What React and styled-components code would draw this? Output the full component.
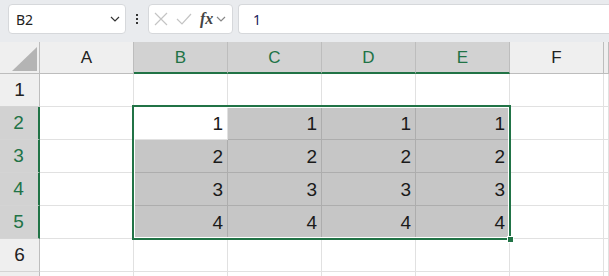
import React from 'react'
import styled, { createGlobalStyle } from 'styled-components'

const GREEN = '#217346'

const GlobalStyle = createGlobalStyle`
    html, body {
        margin: 0;
        padding: 0;
        background: #fff;
        overflow: hidden;
    }
    body {
        font-family: 'Noto Sans', 'Liberation Sans', sans-serif;
    }
    * {
        box-sizing: border-box;
    }
`

const columns = ['A', 'B', 'C', 'D', 'E', 'F', '']
const rows = [1, 2, 3, 4, 5, 6, 7]
const values = { 2: 1, 3: 2, 4: 3, 5: 4 }

const isSelCol = (c) => c >= 1 && c <= 4
const isSelRow = (r) => r >= 2 && r <= 5

function Chevron({ color = '#444' }) {
    return (
        <svg width="10" height="6" viewBox="0 0 10 6">
            <path d="M1 1 L5 5 L9 1" fill="none" stroke={color} strokeWidth="1.2" />
        </svg>
    )
}

function App() {
    return (
        <>
            <GlobalStyle />
            <Page>
                <Toolbar>
                    <NameBox>
                        <NameText>B2</NameText>
                        <Chevron color="#333" />
                    </NameBox>
                    <Dots>
                        <Dot />
                        <Dot />
                        <Dot />
                    </Dots>
                    <FxBox>
                        <svg width="14" height="14" viewBox="0 0 14 14">
                            <path d="M1 1 L13 13 M13 1 L1 13" stroke="#c4c4c4" strokeWidth="1.2" />
                        </svg>
                        <svg width="16" height="12" viewBox="0 0 16 12">
                            <path d="M1 6 L6 11 L15 1" fill="none" stroke="#c4c4c4" strokeWidth="1.2" />
                        </svg>
                        <Fx>fx</Fx>
                        <Chevron color="#888" />
                    </FxBox>
                    <FormulaBar>
                        <FormulaText>1</FormulaText>
                    </FormulaBar>
                </Toolbar>
                <Sheet>
                    <Corner>
                        <Triangle />
                    </Corner>
                    {columns.map((c, i) => (
                        <ColHead key={'h' + i} $col={i + 2} $sel={isSelCol(i)}>{c}</ColHead>
                    ))}
                    {rows.map((r) => (
                        <React.Fragment key={r}>
                            {/* row 7 only peeks in at the bottom edge, its label is out of view */}
                            <RowHead $row={r + 1} $sel={isSelRow(r)}>{r < 7 ? r : ''}</RowHead>
                            {columns.map((c, i) => {
                                const sel = isSelRow(r) && isSelCol(i)
                                const active = r === 2 && i === 1
                                return (
                                    <Cell key={'c' + i} $row={r + 1} $col={i + 2} $sel={sel && !active}>
                                        {sel ? values[r] : ''}
                                    </Cell>
                                )
                            })}
                        </React.Fragment>
                    ))}
                    <Selection>
                        <Handle />
                    </Selection>
                </Sheet>
            </Page>
        </>
    )
}

const Page = styled.div`
    width: 609px;
    height: 276px;
    overflow: hidden;
    background: #fff;
`
const Toolbar = styled.div`
    height: 42px;
    background: #e9ebee;
    display: flex;
    align-items: flex-start;
    padding: 4px 0 0 8px;
`
const NameBox = styled.div`
    width: 118px;
    height: 30px;
    background: #fff;
    border: 1px solid #d6d8db;
    border-radius: 4px;
    display: flex;
    align-items: center;
    justify-content: space-between;
    padding: 0 5px 0 7px;
`
const NameText = styled.span`
    font-size: 14px;
    color: #222;
    padding-top: 1px;
`
const Dots = styled.div`
    width: 22px;
    height: 30px;
    display: flex;
    flex-direction: column;
    align-items: center;
    justify-content: center;
    gap: 2px;
`
const Dot = styled.span`
    width: 2px;
    height: 2px;
    background: #333;
`
const FxBox = styled.div`
    width: 85px;
    height: 30px;
    background: #fff;
    border: 1px solid #d6d8db;
    border-radius: 4px;
    display: flex;
    align-items: center;
    gap: 8px;
    padding: 0 0 0 5px;
`
const Fx = styled.span`
    font-family: 'Liberation Serif', serif;
    font-style: italic;
    font-weight: 700;
    font-size: 16px;
    color: #444;
    margin-right: -5px;
`
const FormulaBar = styled.div`
    flex: 1;
    height: 30px;
    margin-left: 5px;
    background: #fff;
    border: 1px solid #d6d8db;
    border-right: none;
    border-radius: 4px 0 0 4px;
    display: flex;
    align-items: center;
    padding-left: 14px;
`
const FormulaText = styled.span`
    font-size: 14px;
    color: #1c1c5c;
`
const Sheet = styled.div`
    display: grid;
    grid-template-columns: 40px repeat(6, 94px) 1fr;
    grid-template-rows: 32px repeat(7, 33px);
`
const Corner = styled.div`
    grid-row: 1;
    grid-column: 1;
    background: #efefef;
    border-right: 1px solid #bdbdbd;
    border-bottom: 1px solid #bdbdbd;
    display: flex;
    align-items: flex-end;
    justify-content: flex-end;
    padding: 0 2px 2px 0;
`
const Triangle = styled.div`
    width: 25px;
    height: 24px;
    background: #b4b4b4;
    clip-path: polygon(100% 0, 100% 100%, 0 100%);
`
const ColHead = styled.div`
    grid-row: 1;
    grid-column: ${(p) => p.$col};
    background: ${(p) => (p.$sel ? '#d2d2d2' : '#efefef')};
    color: ${(p) => (p.$sel ? GREEN : '#222')};
    border-right: 1px solid #bdbdbd;
    border-bottom: ${(p) => (p.$sel ? `2px solid ${GREEN}` : '1px solid #bdbdbd')};
    font-family: 'Liberation Sans', sans-serif;
    font-size: 17px;
    display: flex;
    align-items: center;
    justify-content: center;
    padding-top: ${(p) => (p.$sel ? '1px' : '0')};
`
const RowHead = styled.div`
    grid-row: ${(p) => p.$row};
    grid-column: 1;
    background: ${(p) => (p.$sel ? '#d2d2d2' : '#efefef')};
    color: ${(p) => (p.$sel ? GREEN : '#222')};
    border-right: ${(p) => (p.$sel ? `2px solid ${GREEN}` : '1px solid #bdbdbd')};
    border-bottom: 1px solid #d4d4d4;
    font-family: 'Liberation Sans', sans-serif;
    font-size: 19px;
    display: flex;
    align-items: center;
    justify-content: center;
    padding-right: ${(p) => (p.$sel ? '1px' : '0')};
`
const Cell = styled.div`
    grid-row: ${(p) => p.$row};
    grid-column: ${(p) => p.$col};
    background: ${(p) => (p.$sel ? '#c6c6c6' : '#fff')};
    border-right: 1px solid ${(p) => (p.$sel ? '#adadad' : '#e1e1e1')};
    border-bottom: 1px solid ${(p) => (p.$sel ? '#adadad' : '#e1e1e1')};
    font-family: 'Liberation Sans', sans-serif;
    font-size: 19px;
    color: #1a1a1a;
    display: flex;
    align-items: center;
    justify-content: flex-end;
    padding: 1px 4px 0 0;
`
const Selection = styled.div`
    grid-column: 3 / 7;
    grid-row: 3 / 7;
    margin: -2px -1px -1px -2px;
    border: 2px solid ${GREEN};
    box-shadow: inset 0 0 0 1px #fff;
    position: relative;
    pointer-events: none;
`
const Handle = styled.div`
    position: absolute;
    right: -5px;
    bottom: -5px;
    width: 7px;
    height: 7px;
    background: ${GREEN};
    border: 1px solid #fff;
`

export default App
